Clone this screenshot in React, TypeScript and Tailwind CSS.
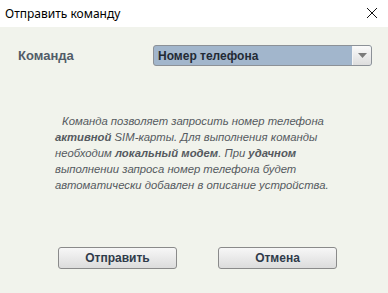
import React from 'react';

const Button: React.FC<{ label: string }> = ({ label }) => (
    <button className="w-[119px] h-[22px] rounded-[3px] border border-[#8a8a8a] bg-gradient-to-b from-[#f7f7f7] to-[#dcdcdc] text-[12px] font-bold text-[#2f3b4a] leading-none">
        {label}
    </button>
);

export default function App() {
    return (
        <div className="w-[388px] h-[293px] flex flex-col bg-[#f1f3ec] overflow-hidden" style={{ fontFamily: '"Liberation Sans", Arial, sans-serif' }}>
            <div className="h-[27px] bg-white flex items-center justify-between pl-[5px] pr-[4px]">
                <span className="text-[12px] text-black" style={{ fontFamily: '"Noto Sans", "Open Sans", sans-serif' }}>Отправить команду</span>
                <svg width="24" height="24" viewBox="0 0 24 24" className="mt-[-2px]">
                    <path d="M7 7 L17 17 M17 7 L7 17" stroke="#111" strokeWidth="1" fill="none" />
                </svg>
            </div>

            <div className="flex-1 flex flex-col">
                <div className="flex items-center mt-[18px] pl-[18px]">
                    <span className="w-[135px] text-[13px] font-bold text-[#525c68]">Команда</span>
                    <div className="w-[219px] h-[21px] flex rounded-[3px] border border-[#8c9197] bg-[#a2b6cc] overflow-hidden">
                        <span className="flex-1 flex items-center pl-[4px] text-[12px] font-bold text-[#222a35]">Номер телефона</span>
                        <div className="w-[19px] flex items-center justify-center border-l border-[#f5f5f5] bg-gradient-to-b from-[#fafafa] to-[#dedede]">
                            <svg width="9" height="5" viewBox="0 0 9 5">
                                <path d="M0 0 H9 L4.5 5 Z" fill="#7b7b7b" />
                            </svg>
                        </div>
                    </div>
                </div>

                <p className="mt-[47px] ml-[55px] w-[285px] text-[11.3px] italic leading-[16px] text-[#555a60] indent-[7px]">
                    Команда позволяет запросить номер телефона <b>активной</b> SIM-карты. Для выполнения команды необходим <b>локальный модем</b>. При <b>удачном</b> выполнении запроса номер телефона будет автоматически добавлен в описание устройства.
                </p>

                <div className="mt-auto mb-[24px] flex gap-[41px] pl-[58px]">
                    <Button label="Отправить" />
                    <Button label="Отмена" />
                </div>
            </div>
        </div>
    );
}
